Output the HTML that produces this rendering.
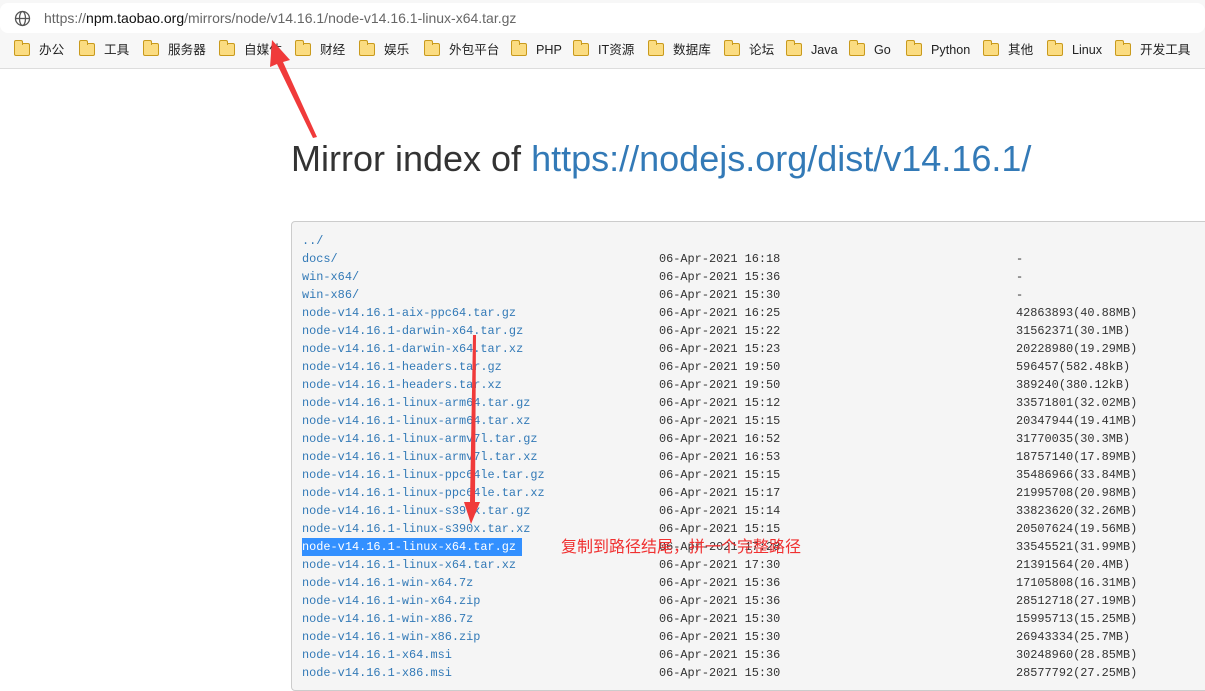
<!DOCTYPE html>
<html><head><meta charset="utf-8"><style>
*{margin:0;padding:0;box-sizing:border-box}
body{width:1205px;height:677px;overflow:hidden;background:#fff;position:relative;font-family:"Liberation Sans","Noto Sans CJK SC",sans-serif}
.top{position:absolute;left:0;top:0;width:1205px;height:69px;background:#f7f7f7;border-bottom:1px solid #ddd}
.url{position:absolute;left:0;top:3px;width:1205px;height:30px;background:#fff;border-radius:8px}
.url span{position:absolute;left:44px;top:7px;font-size:14px;color:#666;white-space:nowrap}
.url b{font-weight:normal;color:#111}
.bm{position:absolute;top:43px;font-size:12.6px;color:#222;white-space:nowrap;line-height:15px}
.bm i{position:absolute;left:-25px;top:0px;width:16px;height:13px;background:#fbdc81;border:1.5px solid #c99a1c;border-radius:2px}
.bm i:before{content:"";position:absolute;left:-1.5px;top:-4px;width:7px;height:4px;background:#fbdc81;border:1.5px solid #c99a1c;border-bottom:none;border-radius:2px 2px 0 0}
h1{position:absolute;left:291px;top:138px;font-size:36px;font-weight:normal;color:#333;white-space:nowrap;font-family:"Liberation Sans",sans-serif}
h1 a{color:#337ab7}
.box{position:absolute;left:291px;top:221px;width:930px;height:470px;background:#f5f5f5;border:1px solid #ccc;border-radius:4px}
.row{position:absolute;left:302px;font-family:"Liberation Mono",monospace;font-size:11.9px;line-height:18px;white-space:pre;color:#333}
.row a{color:#337ab7;position:absolute;left:0}
.row .d{position:absolute;left:357px}
.row .s{position:absolute;left:714px}
.sel{background:#3390ff;color:#fff!important;padding:0 6px 0 0}
.note{position:absolute;left:561px;top:533px;font-size:16px;color:#f03030;white-space:nowrap}
</style></head><body>
<div class="top">
<div class="url">
<svg style="position:absolute;left:14px;top:7px" width="17" height="17" viewBox="0 0 17 17" fill="none" stroke="#555" stroke-width="1.3"><circle cx="8.5" cy="8.5" r="7"/><ellipse cx="8.5" cy="8.5" rx="3" ry="7"/><path d="M1.5 8.5h14"/></svg>
<span>https://<b>npm.taobao.org</b>/mirrors/node/v14.16.1/node-v14.16.1-linux-x64.tar.gz</span></div>
<div class="bm" style="left:39px"><i></i>办公</div>
<div class="bm" style="left:104px"><i></i>工具</div>
<div class="bm" style="left:168px"><i></i>服务器</div>
<div class="bm" style="left:244px"><i></i>自媒体</div>
<div class="bm" style="left:320px"><i></i>财经</div>
<div class="bm" style="left:384px"><i></i>娱乐</div>
<div class="bm" style="left:449px"><i></i>外包平台</div>
<div class="bm" style="left:536px"><i></i>PHP</div>
<div class="bm" style="left:598px"><i></i>IT资源</div>
<div class="bm" style="left:673px"><i></i>数据库</div>
<div class="bm" style="left:749px"><i></i>论坛</div>
<div class="bm" style="left:811px"><i></i>Java</div>
<div class="bm" style="left:874px"><i></i>Go</div>
<div class="bm" style="left:931px"><i></i>Python</div>
<div class="bm" style="left:1008px"><i></i>其他</div>
<div class="bm" style="left:1072px"><i></i>Linux</div>
<div class="bm" style="left:1140px"><i></i>开发工具</div>
</div>
<h1>Mirror index of <a>https://nodejs.org/dist/v14.16.1/</a></h1>
<div class="box"></div>
<div class="row" style="top:232px"><a>../</a></div>
<div class="row" style="top:250px"><a>docs/</a><span class="d">06-Apr-2021 16:18</span><span class="s">-</span></div>
<div class="row" style="top:268px"><a>win-x64/</a><span class="d">06-Apr-2021 15:36</span><span class="s">-</span></div>
<div class="row" style="top:286px"><a>win-x86/</a><span class="d">06-Apr-2021 15:30</span><span class="s">-</span></div>
<div class="row" style="top:304px"><a>node-v14.16.1-aix-ppc64.tar.gz</a><span class="d">06-Apr-2021 16:25</span><span class="s">42863893(40.88MB)</span></div>
<div class="row" style="top:322px"><a>node-v14.16.1-darwin-x64.tar.gz</a><span class="d">06-Apr-2021 15:22</span><span class="s">31562371(30.1MB)</span></div>
<div class="row" style="top:340px"><a>node-v14.16.1-darwin-x64.tar.xz</a><span class="d">06-Apr-2021 15:23</span><span class="s">20228980(19.29MB)</span></div>
<div class="row" style="top:358px"><a>node-v14.16.1-headers.tar.gz</a><span class="d">06-Apr-2021 19:50</span><span class="s">596457(582.48kB)</span></div>
<div class="row" style="top:376px"><a>node-v14.16.1-headers.tar.xz</a><span class="d">06-Apr-2021 19:50</span><span class="s">389240(380.12kB)</span></div>
<div class="row" style="top:394px"><a>node-v14.16.1-linux-arm64.tar.gz</a><span class="d">06-Apr-2021 15:12</span><span class="s">33571801(32.02MB)</span></div>
<div class="row" style="top:412px"><a>node-v14.16.1-linux-arm64.tar.xz</a><span class="d">06-Apr-2021 15:15</span><span class="s">20347944(19.41MB)</span></div>
<div class="row" style="top:430px"><a>node-v14.16.1-linux-armv7l.tar.gz</a><span class="d">06-Apr-2021 16:52</span><span class="s">31770035(30.3MB)</span></div>
<div class="row" style="top:448px"><a>node-v14.16.1-linux-armv7l.tar.xz</a><span class="d">06-Apr-2021 16:53</span><span class="s">18757140(17.89MB)</span></div>
<div class="row" style="top:466px"><a>node-v14.16.1-linux-ppc64le.tar.gz</a><span class="d">06-Apr-2021 15:15</span><span class="s">35486966(33.84MB)</span></div>
<div class="row" style="top:484px"><a>node-v14.16.1-linux-ppc64le.tar.xz</a><span class="d">06-Apr-2021 15:17</span><span class="s">21995708(20.98MB)</span></div>
<div class="row" style="top:502px"><a>node-v14.16.1-linux-s390x.tar.gz</a><span class="d">06-Apr-2021 15:14</span><span class="s">33823620(32.26MB)</span></div>
<div class="row" style="top:520px"><a>node-v14.16.1-linux-s390x.tar.xz</a><span class="d">06-Apr-2021 15:15</span><span class="s">20507624(19.56MB)</span></div>
<div class="row" style="top:538px"><a class="sel">node-v14.16.1-linux-x64.tar.gz</a><span class="d">06-Apr-2021 17:28</span><span class="s">33545521(31.99MB)</span></div>
<div class="row" style="top:556px"><a>node-v14.16.1-linux-x64.tar.xz</a><span class="d">06-Apr-2021 17:30</span><span class="s">21391564(20.4MB)</span></div>
<div class="row" style="top:574px"><a>node-v14.16.1-win-x64.7z</a><span class="d">06-Apr-2021 15:36</span><span class="s">17105808(16.31MB)</span></div>
<div class="row" style="top:592px"><a>node-v14.16.1-win-x64.zip</a><span class="d">06-Apr-2021 15:36</span><span class="s">28512718(27.19MB)</span></div>
<div class="row" style="top:610px"><a>node-v14.16.1-win-x86.7z</a><span class="d">06-Apr-2021 15:30</span><span class="s">15995713(15.25MB)</span></div>
<div class="row" style="top:628px"><a>node-v14.16.1-win-x86.zip</a><span class="d">06-Apr-2021 15:30</span><span class="s">26943334(25.7MB)</span></div>
<div class="row" style="top:646px"><a>node-v14.16.1-x64.msi</a><span class="d">06-Apr-2021 15:36</span><span class="s">30248960(28.85MB)</span></div>
<div class="row" style="top:664px"><a>node-v14.16.1-x86.msi</a><span class="d">06-Apr-2021 15:30</span><span class="s">28577792(27.25MB)</span></div>
<div class="note">复制到路径结尾，拼一个完整路径</div>
<svg style="position:absolute;left:0;top:0" width="1205" height="677">
<polygon fill="#f03a3a" points="272,40 290,60 283,62 317,137 313,138 277,64 270,67"/>
<polygon fill="#f03a3a" points="473,335 476,335 475,502 480,502 471,524 464,502 470,502"/>
</svg>
</body></html>
